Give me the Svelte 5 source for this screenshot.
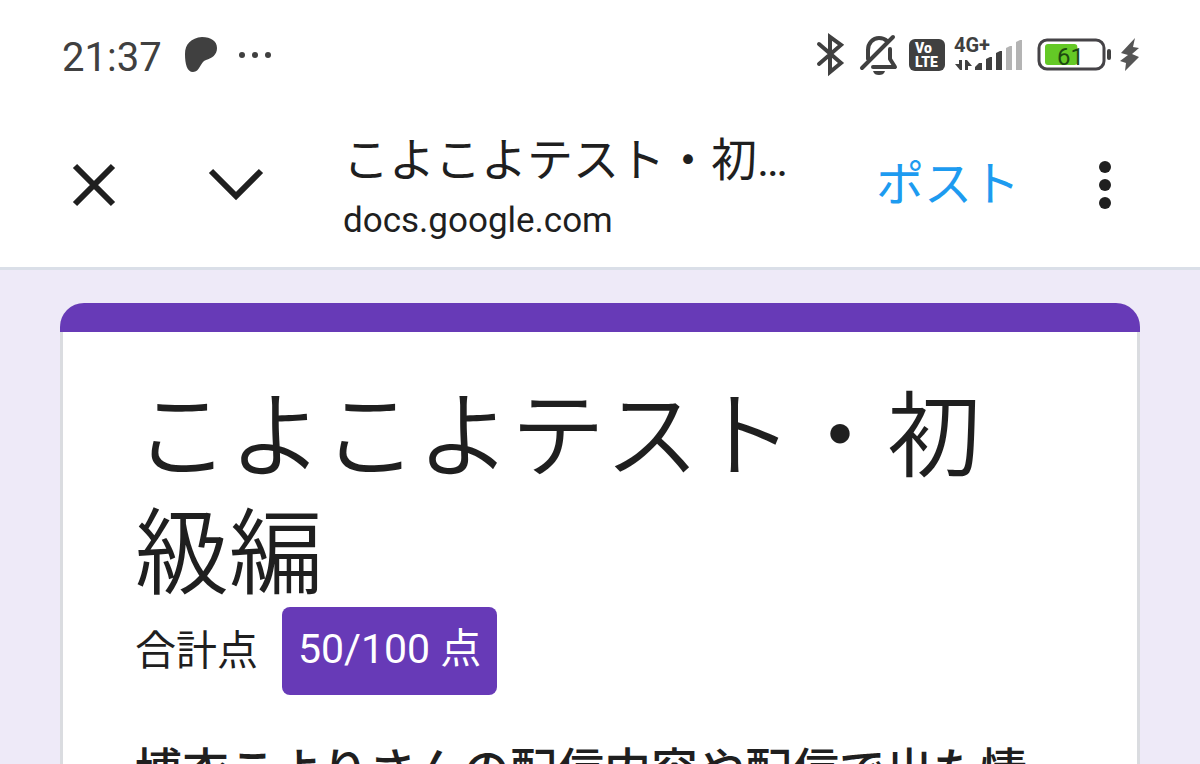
<script lang="ts">
	const site = 'docs.google.com';
	const formTitle = 'こよこよテスト・初級編';
	const description = '博衣こよりさんの配信内容や配信で出た情報をもとにしたテストです。';

	let score = 50;
	let total = 100;
	let battery = 61;
</script>

<div class="status">
	<span class="time">21:37</span>
	<svg class="patreon" width="32" height="36" viewBox="0 0 32 36" aria-hidden="true">
		<path d="M0 17C0 7 6 1 17 0C26 0 32 4 32 11C32 18 27 21 21 23C15 25 15 35 8 35C2 35 0 27 0 17Z" />
	</svg>
	<svg width="34" height="36" viewBox="0 0 34 36" aria-hidden="true">
		<circle cx="4" cy="18" r="3" />
		<circle cx="17" cy="18" r="3" />
		<circle cx="30" cy="18" r="3" />
	</svg>

	<div class="icons">
		<svg width="34" height="44" viewBox="0 0 34 44" aria-hidden="true">
			<path class="line" d="M3 11L25 30L14 39V4L25 12L3 31" />
		</svg>
		<svg width="41" height="44" viewBox="0 0 41 44" aria-hidden="true">
			<path class="line" d="M3 35L34 4M9 26V17C9 10 14 5 20 5C23 5 26 6 28 8" />
			<path class="line" stroke-linejoin="round" d="M31 16V26L36 34H14" />
			<path d="M14 38H26C25 41 23 42 20 42S15 41 14 38Z" />
		</svg>
		<svg width="36" height="44" viewBox="0 0 36 44" aria-hidden="true">
			<rect y="6" width="36" height="32" rx="6" />
			<text class="volte" x="6" y="20">Vo</text>
			<text class="volte" x="6" y="34">LTE</text>
		</svg>
		<svg width="73" height="44" viewBox="0 0 73 44" aria-hidden="true">
			<text class="network" x="0" y="19">4G+</text>
			<path d="M5 27H8V37H6L1 31H5ZM11 37V27H13L18 33H14V37Z" />
			<path d="M21 37V34L25 30H28V37ZM32 37V26L36 24H38V37ZM42 37V20L46 18H48V37Z" />
			<path class="weak" d="M52 37V15L56 13H58V37ZM62 37V9L66 7H68V37Z" />
		</svg>
		<svg width="75" height="44" viewBox="0 0 75 44" role="img" aria-label="battery">
			<rect class="shell" x="3" y="7" width="65" height="29" rx="8" />
			<rect class="charge" x="9" y="11" width={(battery / 100) * 53} height="21" rx="3" />
			<rect x="71" y="16" width="4" height="11" rx="2" />
			<text class="percent" x="21" y="32">{battery}</text>
		</svg>
		<svg width="20" height="44" viewBox="0 0 20 44" aria-hidden="true">
			<path class="bolt" d="M15 5L1 20L8 22L0 28L6 30L5 38L19 24L12 21L19 15L13 14Z" />
		</svg>
	</div>
</div>

<header>
	<button class="close" aria-label="閉じる">
		<svg width="42" height="42" viewBox="0 0 42 42">
			<path d="M2 2L40 40M40 2L2 40" />
		</svg>
	</button>
	<button class="minimize" aria-label="最小化">
		<svg width="54" height="34" viewBox="0 0 54 34">
			<path d="M2 3L27 28L52 3" />
		</svg>
	</button>
	<div class="page">
		<div class="name">{formTitle}</div>
		<div class="site">{site}</div>
	</div>
	<button class="post">ポスト</button>
	<button class="more" aria-label="メニュー">
		<svg width="14" height="50" viewBox="0 0 14 50">
			<circle cx="7" cy="7" r="6" />
			<circle cx="7" cy="25" r="6" />
			<circle cx="7" cy="43" r="6" />
		</svg>
	</button>
</header>

<main>
	<section>
		<h1>{formTitle}</h1>
		<div class="score">
			<span>合計点</span>
			<span class="badge">{score}/{total} 点</span>
		</div>
		<p>{description}</p>
	</section>
</main>

<style>
	:global(body) {
		margin: 0;
		height: 100vh;
		overflow: hidden;
		background: #eeeaf8;
		color: #1f1f1f;
		font-family: Roboto, "Noto Sans CJK JP", sans-serif;
	}

	svg {
		display: block;
		flex: none;
		overflow: visible;
	}

	.status {
		display: flex;
		align-items: center;
		height: 110px;
		padding: 0 60px;
		box-sizing: border-box;
		background: #fff;
		color: #404040;
		fill: #404040;
	}

	.time {
		padding: 5px 0 0 2px;
		font-size: 40px;
		line-height: 44px;
	}

	.patreon {
		margin: 0 21px 0 23px;
	}

	.icons {
		display: flex;
		gap: 9px;
		margin-left: auto;
	}

	.line {
		fill: none;
		stroke: #404040;
		stroke-width: 4;
		stroke-linecap: round;
	}

	.volte {
		fill: #fff;
		font-size: 14px;
		font-weight: 900;
	}

	.network {
		font-size: 20px;
		font-weight: 700;
	}

	.weak {
		fill: #b4b4b4;
	}

	.shell {
		fill: none;
		stroke: #454347;
		stroke-width: 3;
	}

	.charge {
		fill: #64c926;
	}

	.percent {
		fill: #1c4a10;
		font-size: 24px;
	}

	.bolt {
		fill: #555;
	}

	header {
		display: flex;
		align-items: center;
		height: 160px;
		padding: 0 88px 8px 73px;
		box-sizing: border-box;
		border-bottom: 3px solid #dadfe8;
		background: #fff;
	}

	button {
		flex: none;
		padding: 0;
		border: 0;
		background: none;
		font: inherit;
		cursor: pointer;
	}

	header path {
		fill: none;
		stroke: #1f1f1f;
		stroke-width: 6;
	}

	header circle {
		fill: #1f1f1f;
	}

	.close {
		margin-right: 94px;
	}

	.minimize {
		margin-right: 80px;
	}

	.page {
		flex: 1;
		min-width: 0;
		margin-right: 56px;
		padding-top: 8px;
	}

	.name {
		overflow: hidden;
		font-size: 46px;
		line-height: 64px;
		text-overflow: ellipsis;
		white-space: nowrap;
	}

	.site {
		font-size: 35px;
		line-height: 58px;
	}

	.post {
		margin-right: 78px;
		color: #1d9bf0;
		font-size: 48px;
		line-height: 64px;
	}

	main {
		padding: 33px 60px 0;
	}

	section {
		border: 3px solid #dadce0;
		border-top: 0;
		border-radius: 24px 24px 0 0;
		padding: 0 72px 48px;
		background: #fff;
	}

	section::before {
		content: "";
		display: block;
		height: 29px;
		margin: 0 -75px;
		border-radius: 24px 24px 0 0;
		background: #673ab7;
	}

	h1 {
		margin: 48px 0 0;
		font-size: 94px;
		font-weight: 350;
		line-height: 117px;
	}

	.score {
		display: flex;
		align-items: center;
		gap: 24px;
		margin-top: -7px;
		font-size: 41px;
		line-height: 56px;
	}

	.badge {
		padding: 14px 16px 18px;
		border-radius: 8px;
		background: #673ab7;
		color: #fff;
	}

	p {
		margin: 41px 0 0;
		font-size: 47px;
		font-weight: 500;
		line-height: 70px;
	}
</style>
